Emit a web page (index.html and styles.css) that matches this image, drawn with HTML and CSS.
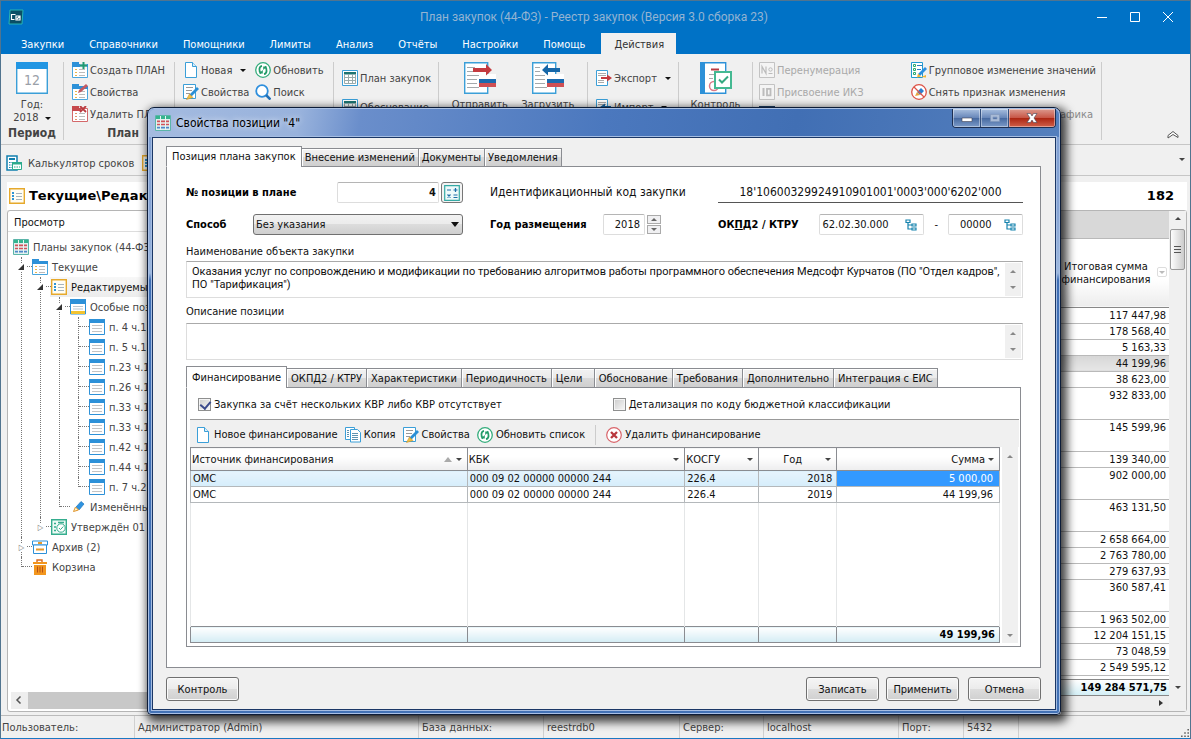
FILE: index.html
```html
<!DOCTYPE html>
<html lang="ru">
<head>
<meta charset="utf-8">
<title>План закупок (44-ФЗ) - Реестр закупок</title>
<link rel="stylesheet" href="styles.css">
</head>
<body>
<svg class="defs" aria-hidden="true">
  <symbol id="doc" viewBox="0 0 16 16"><path d="M2.5.5h7l4 4v11h-11z" fill="#fff" stroke="#3b9fd8"/><path d="M9.500 .5v4h4" fill="#d8eefb" stroke="#3b9fd8"/></symbol>
  <symbol id="edit" viewBox="0 0 16 16"><path d="M.5.5h12v14H.5z" fill="#fff" stroke="#3b9fd8"/><path d="M3 3.500h7M3 6.500h6M3 9.500h4" stroke="#999"/><path d="M6 13l1-3 7-7 2 2-7 7z" fill="#2a8fd6"/><path d="M3.500 15.500l3-5.500 3.500 3.500z" fill="#f3c244" stroke="#c8922a" stroke-width=".6"/></symbol>
  <symbol id="refresh" viewBox="0 0 16 16"><circle cx="8" cy="8" r="7.300" fill="#fff" stroke="#35ad7c" stroke-width="1.300"/><path d="M7 3.800C4 4.500 3.500 9 6 11.500M9 12.200c3-.7 3.500-5.200 1-7.700" fill="none" stroke="#239b68" stroke-width="1.800"/><path d="M4 11.500h3.800V8zM12 4.500H8.200V8z" fill="#239b68"/></symbol>
  <symbol id="search" viewBox="0 0 16 16"><circle cx="7" cy="7" r="5.800" fill="#fff" stroke="#2f8fdd" stroke-width="1.800"/><path d="M11 11l4.500 4.500" stroke="#2472b8" stroke-width="2.600"/></symbol>
  <symbol id="plan" viewBox="0 0 16 16"><path d="M.5 2.500h15v13H.5z" fill="#fff" stroke="#4aa6de"/><path d="M0 0h7v2h9v3H0z" fill="#2d91d8"/><path d="M3 7.500h2M3 10.500h2M3 13.500h2" stroke="#e8b54a"/><path d="M7 7.500h6M7 10.500h6M7 13.500h6" stroke="#bbb"/></symbol>
  <symbol id="planadd" viewBox="0 0 16 16"><use href="#plan"/><path d="M8 0h7v7H8z" fill="#f0f0f0" opacity=".6"/><path d="M11.500 0v7M8 3.500h7" stroke="#219a72" stroke-width="2"/></symbol>
  <symbol id="planedit" viewBox="0 0 16 16"><use href="#plan"/><path d="M6 9l1-3 7-6 2 2-7 6z" fill="#c45a62"/></symbol>
  <symbol id="plandel" viewBox="0 0 16 16"><path d="M.5 2.500h15v13H.5z" fill="#fff" stroke="#d4686a"/><path d="M0 0h7v2h2v3H0z" fill="#c6494d"/><path d="M3 7.500h2M3 10.500h2M3 13.500h2" stroke="#e0926a"/><path d="M7 7.500h6M7 10.500h6M7 13.500h6" stroke="#bbb"/><path d="M8 0l6 6M14 0L8 6" stroke="#b93b40" stroke-width="1.800"/></symbol>
  <symbol id="table" viewBox="0 0 16 16"><path d="M.5.5h15v15H.5z" fill="#fff" stroke="#3b9fd8"/><path d="M2 2h12v2.500H2z" fill="#1c7370"/><path d="M2.500 4v9.500h11V4M2.500 7.500h11M2.500 10.500h11M6.500 4v9M10.500 4v9" fill="none" stroke="#9aa"/></symbol>
  <symbol id="grid" viewBox="0 0 16 16"><path d="M.5.5h15v15H.5z" fill="#dff1ee" stroke="#5bb5a9"/><path d="M1 1h14v3H1z" fill="#36b48f"/><path d="M2 6.500h12M2 9.500h12" stroke="#d2525a" stroke-width="2"/><path d="M2 12.500h12" stroke="#4f88c8" stroke-width="2"/><path d="M5.500 1v14M10.500 1v14M1 8h14M1 11h14" stroke="#e9f5f3"/></symbol>
  <symbol id="list" viewBox="0 0 16 16"><path d="M.7.7h14.600v14.600H.7z" fill="#fffdf4" stroke="#e6a92c" stroke-width="1.400"/><path d="M3 4h2v2H3zM3 7h2v2H3zM3 10h2v2H3z" fill="#2d95d6"/><path d="M7 5.500h6M7 8.500h6M7 11.500h6" stroke="#a7b5bd"/></symbol>
  <symbol id="special" viewBox="0 0 16 16"><path d="M.5.5h15v14.500H.5z" fill="#fff" stroke="#2d91d8"/><path d="M0 0h16v5H0z" fill="#2d91d8"/><path d="M3 7.500h10M3 10h10" stroke="#b8c7cf"/><path d="M1 12h14v3H1z" fill="#f2c331"/></symbol>
  <symbol id="page" viewBox="0 0 16 16"><path d="M.5.500h15v15H.5z" fill="#fff" stroke="#2d91d8"/><path d="M0 0h16v4H0z" fill="#2d91d8"/><path d="M3 6.500h10M3 9.500h10M3 12.500h10" stroke="#c4c4c4"/></symbol>
  <symbol id="pen" viewBox="0 0 16 16"><path d="M6 8l5-5.500 3 2.500-5 6z" fill="#2f93e0" stroke="#1d77bd" stroke-width=".7"/><path d="M3.500 12.500l2-4.500 3 3z" fill="#fff4d0" stroke="#e0952c"/></symbol>
  <symbol id="approved" viewBox="0 0 16 16"><path d="M.7.7h14.600v14.600H.7z" fill="#eefaf6" stroke="#35ad8e" stroke-width="1.400"/><path d="M3 4.500h2M3 8h2M3 11.500h2M7 3.500h6" stroke="#35ad8e" stroke-width="1.500"/><circle cx="10" cy="9" r="4.200" fill="#fff" stroke="#35ad8e"/><path d="M8 9l1.500 1.600L12.300 7.500" fill="none" stroke="#35ad8e"/></symbol>
  <symbol id="archive" viewBox="0 0 16 16"><path d="M.5 2h15v4H.5z" fill="#fff" stroke="#2d91d8"/><path d="M1.500 6h13v8.500h-13z" fill="#fff" stroke="#2d91d8"/><path d="M6 4h4M4 10.500h8" stroke="#e79a2b" stroke-width="2"/></symbol>
  <symbol id="trash" viewBox="0 0 16 16"><path d="M5 3V1h5v2" fill="none" stroke="#d96a1f" stroke-width="1.400"/><path d="M1 3h14v2H1zM2 6h12v10H2z" fill="#f2961e"/><path d="M5.500 7.500v6M8 7.500v6M10.500 7.500v6" stroke="#b85018"/></symbol>
  <symbol id="calc" viewBox="0 0 16 16"><path d="M1 1h10v14H1z" fill="#fff" stroke="#117fae" stroke-width="1.500"/><path d="M3 3h6v2H3z" fill="#117fae"/><path d="M3 7.500h6M3 10h4M3 12.500h3" stroke="#117fae" stroke-dasharray="1.500 1"/><path d="M6.500 7.500h9v7h-9z" fill="#fff" stroke="#2cab8d"/><path d="M6 7h10v2.500H6z" fill="#2cab8d"/><path d="M8 12h6" stroke="#2cab8d" stroke-dasharray="1.500 1"/></symbol>
  <symbol id="exp" viewBox="0 0 16 16"><path d="M.5.500h11v15H.5z" fill="#fff" stroke="#3b9fd8"/><path d="M2 3.500h8M2 5.500h8M2 10.500h6M2 12.500h6" stroke="#aaa"/><path d="M5 7h6V4.500l5 3.500-5 3.500V9H5z" fill="#c43a3f"/></symbol>
  <symbol id="imp" viewBox="0 0 16 16"><path d="M.5.500h11v15H.5z" fill="#fff" stroke="#3b9fd8"/><path d="M2 3.500h8M2 5.500h8M2 10.500h6M2 12.500h6" stroke="#aaa"/><path d="M15 7H9V4.500L4 8l5 3.500V9h6z" fill="#1667a8"/></symbol>
  <symbol id="copy" viewBox="0 0 16 16"><path d="M.5.500h9v12h-9z" fill="#fff" stroke="#3b9fd8"/><path d="M5.500 2.500h7l3 3v9.500h-10z" fill="#fff" stroke="#3b9fd8"/><path d="M7 6.500h6M7 8.500h6M7 10.500h6M7 12.500h6M2 3.500h2M2 5.500h2M2 7.500h2M2 9.500h2" stroke="#5d92b0"/></symbol>
  <symbol id="delete" viewBox="0 0 16 16"><circle cx="8" cy="8" r="7.300" fill="#fff" stroke="#d9646a" stroke-width="1.200"/><path d="M5 5l6 6M11 5l-6 6" stroke="#b9383e" stroke-width="2.300"/></symbol>
  <symbol id="num" viewBox="0 0 16 16"><path d="M.5.500h15v15H.5z" fill="#f4f4f4" stroke="#c3c3c3"/><path d="M3 11.500v-7l4 7v-7M9.500 11.500h4" fill="none" stroke="#bcbcbc" stroke-width="1.200"/><circle cx="11.500" cy="7.500" r="1.700" fill="none" stroke="#bcbcbc"/></symbol>
  <symbol id="idn" viewBox="0 0 16 16"><path d="M.5.500h15v15H.5z" fill="#f4f4f4" stroke="#c3c3c3"/><path d="M4.500 4v8" stroke="#bcbcbc" stroke-width="2"/><path d="M8 4.800h3.500v6.500H8z" fill="none" stroke="#bcbcbc" stroke-width="1.800"/></symbol>
  <symbol id="group" viewBox="0 0 16 16"><path d="M.5.500h11v15H.5z" fill="#fff" stroke="#209ad0"/><path d="M2.500 2.500h2v2h-2zM2.500 6.500h2v2h-2zM2.500 10.500h2v2h-2z" fill="none" stroke="#2cab6d"/><path d="M6 3.500h5M6 7.500h4" stroke="#2a80c0"/><path d="M7 12l7-7 2 2-7 7z" fill="#2a8fe0"/><path d="M6 15.500l1-4 3 3zM10 15l5-2v2.500z" fill="#f3b530"/></symbol>
  <symbol id="unmark" viewBox="0 0 16 16"><circle cx="8" cy="8" r="7.300" fill="#fff" stroke="#dd5347" stroke-width="1.300"/><path d="M6 8l4-4 3 3-4 4z" fill="#2a7fd0"/><path d="M4 12l2-4 3 3z" fill="#e9a53f"/><path d="M3 3l10 10" stroke="#dd5347" stroke-width="1.300"/></symbol>
  <symbol id="gantt" viewBox="0 0 16 16"><path d="M0 0h16v16H0z" fill="#2b6cb8"/><path d="M0 0h16v3H0z" fill="#1d3f66"/></symbol>
  <symbol id="tree" viewBox="0 0 12 12"><path d="M1 1h4v2.500H1zM7 5h4v2H7zM7 9h4v2H7zM3 3.500V10h4M3 6h4" fill="none" stroke="#1683ae" stroke-width="1.200"/></symbol>
  <symbol id="send" viewBox="0 0 32 32"><path d="M.7.700h23v30.500H.7z" fill="#fff" stroke="#3b9fd8" stroke-width="1.400"/><path d="M3 5.500h8M3 9.500h6M3 13.500h12M3 17.500h10M3 21.500h10M3 25.500h12" stroke="#a3a8ab"/><path d="M15 12h17v5H15z" fill="#fff"/><path d="M15 17h17v4H15z" fill="#1b6bb0"/><path d="M15 21h17v4H15z" fill="#cf4f54"/><path d="M9 6h13V2l6 6-6 5.500V10H9z" fill="#c43a3f"/></symbol>
  <symbol id="load" viewBox="0 0 32 32"><path d="M.7.700h23v30.500H.7z" fill="#fff" stroke="#3b9fd8" stroke-width="1.400"/><path d="M3 5.500h5M3 9.500h5M3 13.500h10M3 17.500h10M3 21.500h10M3 25.500h12" stroke="#a3a8ab"/><path d="M15 12h17v5H15z" fill="#fff"/><path d="M15 17h17v4H15z" fill="#1b6bb0"/><path d="M15 21h17v4H15z" fill="#cf4f54"/><path d="M28 6H16V2l-6 6 6 5.500V10h12z" fill="#1667a8"/></symbol>
  <symbol id="control" viewBox="0 0 32 32"><path d="M.7.700h25v30.500H.7z" fill="#fff" stroke="#2d91d8" stroke-width="1.400"/><path d="M0 0h5v32H0z" fill="#2d91d8"/><path d="M11 7.500h8" stroke="#b93b40" stroke-width="2"/><path d="M9 12.500h6M9 16.500h4" stroke="#aaa"/><circle cx="14" cy="24" r="4.500" fill="none" stroke="#dc7b88" stroke-width="1.500"/><path d="M15 10h16v16H15z" fill="#fff" stroke="#45b992" stroke-width="2"/><path d="M19 17.500l3 3 6-6" fill="none" stroke="#35a880" stroke-width="2"/></symbol>
  <symbol id="cal" viewBox="0 0 32 32"><path d="M.7.700h30.600v30.600H.7z" fill="#fff" stroke="#3b9fd8" stroke-width="1.400"/><path d="M0 0h32v7H0z" fill="#2196e3"/></symbol>
</svg>

<div class="app">
  <header class="titlebar">
    <svg class="logo" viewBox="0 0 16 16"><path d="M2 1h13l-1 14H1z" fill="#0a4f66" stroke="#27b5b5"/><path d="M7.500 5.500h-4v5h3M8 7h4v4H8zM9 10l3-3" fill="none" stroke="#fff" stroke-width="1.200"/></svg>
    <h1>План закупок (44-ФЗ) - Реестр закупок (Версия 3.0 сборка 23)</h1>
    <div class="winbtns">
      <button aria-label="Свернуть"><svg viewBox="0 0 12 12"><path d="M1 6.500h10"/></svg></button>
      <button aria-label="Развернуть"><svg viewBox="0 0 12 12"><path d="M1.500 1.500h9v9h-9z"/></svg></button>
      <button aria-label="Закрыть"><svg viewBox="0 0 12 12"><path d="M1 1l10 10M11 1L1 11"/></svg></button>
    </div>
  </header>
  <nav class="menu">
    <button>Закупки</button><button>Справочники</button><button>Помощники</button><button>Лимиты</button><button>Анализ</button><button>Отчёты</button><button>Настройки</button><button>Помощь</button><button class="active">Действия</button>
  </nav>

  <section class="ribbon">
    <div class="group g-period">
      <button class="big"><span class="calicon"><svg class="i32"><use href="#cal"/></svg><span class="day">12</span></span><span>Год:</span><span>2018 <i class="dd"></i></span></button>
      <b>Период</b>
    </div>
    <div class="group g-plan">
      <div class="stack">
        <button><svg class="i"><use href="#planadd"/></svg>Создать ПЛАН</button>
        <button><svg class="i"><use href="#planedit"/></svg>Свойства</button>
        <button><svg class="i"><use href="#plandel"/></svg>Удалить ПЛАН</button>
      </div>
      <b>План</b>
    </div>
    <div class="group g-pos">
      <div class="cols">
        <div class="stack">
          <button><svg class="i"><use href="#doc"/></svg>Новая <i class="dd"></i></button>
          <button><svg class="i"><use href="#edit"/></svg>Свойства</button>
        </div>
        <div class="stack">
          <button><svg class="i"><use href="#refresh"/></svg>Обновить</button>
          <button><svg class="i"><use href="#search"/></svg>Поиск</button>
        </div>
      </div>
    </div>
    <div class="group g-forms">
      <div class="stack wide">
        <button><svg class="i"><use href="#table"/></svg>План закупок</button>
        <button><svg class="i"><use href="#table"/></svg>Обоснование</button>
      </div>
    </div>
    <div class="group g-eis">
      <div class="cols">
        <button class="big"><svg class="i32"><use href="#send"/></svg><span>Отправить</span></button>
        <button class="big"><svg class="i32"><use href="#load"/></svg><span>Загрузить</span></button>
      </div>
    </div>
    <div class="group g-exch">
      <div class="stack wide">
        <button><svg class="i"><use href="#exp"/></svg>Экспорт <i class="dd"></i></button>
        <button><svg class="i"><use href="#imp"/></svg>Импорт <i class="dd"></i></button>
      </div>
    </div>
    <div class="group g-check">
      <button class="big"><svg class="i32"><use href="#control"/></svg><span>Контроль</span></button>
    </div>
    <div class="group g-extra">
      <div class="cols">
        <div class="stack">
          <button disabled><svg class="i"><use href="#num"/></svg>Перенумерация</button>
          <button disabled><svg class="i"><use href="#idn"/></svg>Присвоение ИКЗ</button>
          <button disabled aria-label="График"><svg class="i"><use href="#gantt"/></svg></button>
        </div>
        <div class="stack">
          <button><svg class="i"><use href="#group"/></svg>Групповое изменение значений</button>
          <button><svg class="i"><use href="#unmark"/></svg>Снять признак изменения</button>
          <button disabled class="tail">графика</button>
        </div>
      </div>
    </div>
    <button class="collapse" aria-label="Свернуть ленту"><svg viewBox="0 0 12 10"><path d="M1 5.500l5-4 5 4v2L6 4.500 1 8z"/></svg></button>
  </section>

  <section class="quick">
    <button><svg class="i"><use href="#calc"/></svg>Калькулятор сроков</button>
    <svg class="i"><use href="#list"/></svg>
    <i class="dd end"></i>
  </section>

  <main class="work">
    <aside class="side">
      <h2><svg class="i"><use href="#list"/></svg>Текущие\Редак</h2>
      <div class="sidebox">
        <div class="view">Просмотр</div>
        <div class="tree">
          <div class="row"><svg class="i"><use href="#grid"/></svg>Планы закупок (44-ФЗ)</div>
          <ul>
            <li><div class="row"><i class="open"></i><svg class="i"><use href="#plan"/></svg>Текущие</div>
              <ul>
                <li><div class="row sel"><i class="open"></i><svg class="i"><use href="#list"/></svg>Редактируемые</div>
                  <ul>
                    <li><div class="row"><i class="open"></i><svg class="i"><use href="#special"/></svg>Особые позиции</div>
                      <ul>
                        <li><div class="row"><svg class="i"><use href="#page"/></svg>п. 4 ч.1</div></li>
                        <li><div class="row"><svg class="i"><use href="#page"/></svg>п. 5 ч.1</div></li>
                        <li><div class="row"><svg class="i"><use href="#page"/></svg>п.23 ч.1</div></li>
                        <li><div class="row"><svg class="i"><use href="#page"/></svg>п.26 ч.1</div></li>
                        <li><div class="row"><svg class="i"><use href="#page"/></svg>п.33 ч.1</div></li>
                        <li><div class="row"><svg class="i"><use href="#page"/></svg>п.33 ч.1</div></li>
                        <li><div class="row"><svg class="i"><use href="#page"/></svg>п.42 ч.1</div></li>
                        <li><div class="row"><svg class="i"><use href="#page"/></svg>п.44 ч.1</div></li>
                        <li><div class="row"><svg class="i"><use href="#page"/></svg>п. 7 ч.2</div></li>
                      </ul></li>
                    <li><div class="row"><svg class="i"><use href="#pen"/></svg>Изменённые</div></li>
                  </ul></li>
                <li><div class="row"><i class="shut"></i><svg class="i"><use href="#approved"/></svg>Утверждён 01</div></li>
              </ul></li>
            <li><div class="row"><i class="shut"></i><svg class="i"><use href="#archive"/></svg>Архив (2)</div></li>
            <li><div class="row"><svg class="i"><use href="#trash"/></svg>Корзина</div></li>
          </ul>
        </div>
        <div class="hscroll"><svg viewBox="0 0 8 8"><path d="M5.500 .5L2 4l3.500 3.500"/></svg><span></span></div>
      </div>
    </aside>

    <section class="data">
      <div class="count">182</div>
      <div class="datagrid">
        <div class="datamain">
          <table class="sums">
            <colgroup><col><col class="c-sum"></colgroup>
            <thead><tr class="band"><th colspan="2"></th></tr>
            <tr class="head"><th></th><th>Итоговая сумма финансирования<span class="filter"><i class="dd"></i></span></th></tr></thead>
            <tbody>
              <tr><td></td><td>117 447,98</td></tr>
              <tr><td></td><td>178 568,40</td></tr>
              <tr><td></td><td>5 163,33</td></tr>
              <tr class="sel"><td></td><td>44 199,96</td></tr>
              <tr><td></td><td>38 623,00</td></tr>
              <tr class="two"><td></td><td>932 833,00</td></tr>
              <tr class="two"><td></td><td>145 599,96</td></tr>
              <tr><td></td><td>139 340,00</td></tr>
              <tr class="two"><td></td><td>902 000,00</td></tr>
              <tr class="two"><td></td><td>463 131,50</td></tr>
              <tr><td></td><td>2 658 664,00</td></tr>
              <tr><td></td><td>2 763 780,00</td></tr>
              <tr><td></td><td>279 637,93</td></tr>
              <tr class="two"><td></td><td>360 587,41</td></tr>
              <tr><td></td><td>1 963 502,00</td></tr>
              <tr><td></td><td>12 204 151,15</td></tr>
              <tr><td></td><td>73 048,59</td></tr>
              <tr><td></td><td>2 549 595,12</td></tr>
            </tbody>
          </table>
          <div class="total">149 284 571,75</div>
          <div class="hbar"><i></i></div>
        </div>
        <div class="vbar"><i class="up"></i><span class="thumb"><i></i></span><i class="dd"></i></div>
      </div>
    </section>
  </main>

  <footer class="status">
    <span class="s1">Пользователь:</span><span class="s2">Администратор (Admin)</span><span class="s3">База данных:</span><span class="s4">reestrdb0</span><span class="s5">Сервер:</span><span class="s6">localhost</span><span class="s7">Порт:</span><span class="s8">5432</span><span class="s9"></span>
    <svg class="grip" viewBox="0 0 10 10"><path d="M8 0h2v2H8zM4 4h2v2H4zM8 4h2v2H8zM0 8h2v2H0zM4 8h2v2H4zM8 8h2v2H8z"/></svg>
  </footer>
</div>

<div class="dialog" role="dialog" aria-labelledby="dlg-title">
  <div class="dlgbar">
    <svg class="i"><use href="#grid"/></svg>
    <h2 id="dlg-title">Свойства позиции "4"</h2>
    <div class="aero">
      <button aria-label="Свернуть"><svg viewBox="0 0 12 12"><path d="M1 6h10v3.500H1z"/></svg></button>
      <button aria-label="Развернуть" disabled><svg viewBox="0 0 12 12"><path d="M1.500 2.500h9v7h-9zM4 5h4v2H4z" fill-rule="evenodd"/></svg></button>
      <button class="close" aria-label="Закрыть"><svg viewBox="0 0 12 12"><path d="M1 1.500h3.500L6 4l1.500-2.500H11L8 6l3 4.500H7.500L6 8l-1.500 2.500H1L4 6z"/></svg></button>
    </div>
  </div>
  <form class="client">
    <div class="tabs">
      <button type="button" class="tab on">Позиция плана закупок</button><button type="button" class="tab">Внесение изменений</button><button type="button" class="tab">Документы</button><button type="button" class="tab">Уведомления</button>
    </div>
    <div class="panel">
      <div class="fields">
        <div class="cell"><label class="lb" for="pos">№ позиции в плане</label><span class="posbox"><input id="pos" class="box strong" value="4"><button type="button" class="calcbtn" aria-label="Пронумеровать"><svg viewBox="0 0 16 16"><path d="M.7.700h14.600v14.600H.7z" fill="#eefafa" stroke="#35aaa5" stroke-width="1.200"/><path d="M3 5h4M9.500 5h4M11.500 3v4M3.500 9.500l3 3M6.500 9.500l-3 3M9.500 10h4M9.500 12.500h4" stroke="#1c6fa8" stroke-width="1.200"/></svg></button></span></div>
        <div class="cell mid">Идентификационный код закупки</div>
        <div class="cell code">18'10600329924910901001'0003'000'6202'000</div>
        <div class="cell"><label class="lb" for="way">Способ</label><span class="selbox"><select id="way"><option>Без указания</option></select><i class="dd"></i></span></div>
        <div class="cell year"><label class="lb" for="year">Год размещения</label><input id="year" class="box" value="2018"><span class="spin"><button type="button" aria-label="Больше"><i class="up"></i></button><button type="button" aria-label="Меньше"><i class="dd"></i></button></span></div>
        <div class="cell okpd"><label class="lb" for="okpd">ОК<u>П</u>Д2 / КТРУ</label><span class="box pick wide"><input id="okpd" value="62.02.30.000"><button type="button" aria-label="Выбрать ОКПД2"><svg><use href="#tree"/></svg></button></span><span>-</span><span class="box pick"><input aria-label="КТРУ" value="00000"><button type="button" aria-label="Выбрать КТРУ"><svg><use href="#tree"/></svg></button></span></div>
      </div>
      <label class="cap" for="name">Наименование объекта закупки</label>
      <div class="memo"><textarea id="name">Оказания услуг по сопровождению и модификации по требованию алгоритмов работы программного обеспечения Медсофт Курчатов (ПО "Отдел кадров", ПО "Тарификация")</textarea><span class="mscroll"><i class="up"></i><i class="dd"></i></span></div>
      <label class="cap" for="desc">Описание позиции</label>
      <div class="memo"><textarea id="desc"></textarea><span class="mscroll"><i class="up"></i><i class="dd"></i></span></div>

      <div class="tabs inner">
        <button type="button" class="tab on">Финансирование</button><button type="button" class="tab">ОКПД2 / КТРУ</button><button type="button" class="tab">Характеристики</button><button type="button" class="tab">Периодичность</button><button type="button" class="tab">Цели</button><button type="button" class="tab">Обоснование</button><button type="button" class="tab">Требования</button><button type="button" class="tab">Дополнительно</button><button type="button" class="tab">Интеграция с ЕИС</button>
      </div>
      <div class="subpanel">
        <div class="checks">
          <label><input type="checkbox" checked>Закупка за счёт нескольких КВР либо КВР отсутствует</label>
          <label><input type="checkbox">Детализация по коду бюджетной классификации</label>
        </div>
        <div class="tools">
          <button type="button"><svg class="i"><use href="#doc"/></svg>Новое финансирование</button>
          <button type="button"><svg class="i"><use href="#copy"/></svg>Копия</button>
          <button type="button"><svg class="i"><use href="#edit"/></svg>Свойства</button>
          <button type="button"><svg class="i"><use href="#refresh"/></svg>Обновить список</button>
          <span class="sep"></span>
          <button type="button"><svg class="i"><use href="#delete"/></svg>Удалить финансирование</button>
        </div>
        <div class="finbox">
          <table class="fin">
            <colgroup><col class="f1"><col class="f2"><col class="f3"><col class="f4"><col></colgroup>
            <thead><tr><th><div>Источник финансирования<span><i class="up"></i><i class="dd"></i></span></div></th><th><div>КБК<i class="dd"></i></div></th><th><div>КОСГУ<i class="dd"></i></div></th><th><div><span></span>Год<i class="dd"></i></div></th><th><div class="r">Сумма<i class="dd"></i></div></th></tr></thead>
            <tbody>
              <tr class="cur"><td>ОМС</td><td>000 09 02 00000 00000 244</td><td>226.4</td><td class="n">2018</td><td class="n pad hot">5 000,00</td></tr>
              <tr><td>ОМС</td><td>000 09 02 00000 00000 244</td><td>226.4</td><td class="n">2019</td><td class="n pad">44 199,96</td></tr>
              <tr class="fill"><td></td><td></td><td></td><td></td><td></td></tr>
            </tbody>
            <tfoot><tr><td></td><td></td><td></td><td></td><td class="n">49 199,96</td></tr></tfoot>
          </table>
          <span class="fscroll"><i class="up"></i><i class="dd"></i></span>
        </div>
      </div>
    </div>
    <div class="actions">
      <button type="button">Контроль</button><span></span><button type="button">Записать</button><button type="button">Применить</button><button type="button" class="last">Отмена</button>
    </div>
  </form>
</div>
</body>
</html>
```

FILE: styles.css
```css
* { box-sizing: border-box; }
html, body { margin: 0; height: 100%; }
body {
  font: 11px/13px "DejaVu Sans Condensed", "DejaVu Sans", sans-serif;
  color: #111;
  overflow: hidden;
}
button, input, select, textarea { font: inherit; color: inherit; margin: 0; }
button { background: none; border: 0; padding: 0; white-space: nowrap; }
h1, h2 { margin: 0; font-weight: normal; }
.defs { position: absolute; width: 0; height: 0; }
.i { width: 16px; height: 16px; flex: none; }
.i32 { width: 32px; height: 32px; }
.dd, .up { flex: none; width: 0; height: 0; border: 3px solid transparent; }
.dd { border-top-color: currentColor; border-bottom: 0; }
.up { border-bottom-color: currentColor; border-top: 0; }

/* main window */
.app { display: flex; flex-direction: column; height: 100vh; background: #f0f0f0; border: 1px solid #51748f; border-bottom-color: #1a78c2; color: #444; }
.titlebar { display: flex; align-items: center; height: 32px; padding: 0 7px; background: #0072c6; color: #94b4d2; }
.logo { width: 16px; height: 16px; }
.titlebar h1 { flex: 1; padding-left: 68px; text-align: center; font: 12px/14px Roboto, sans-serif; }
.winbtns { display: flex; gap: 21px; padding-right: 9px; }
.winbtns svg { display: block; width: 12px; height: 12px; fill: none; stroke: #fff; }
.menu { display: flex; height: 21px; padding-left: 7px; background: #0072c6; color: #fff; }
.menu button { padding: 2px 12px 0 13px; }
.menu .active { margin-left: 4px; background: #f0f0f0; color: #333; }

.ribbon { display: flex; height: 91px; padding: 8px 0 4px; border-bottom: 1px solid #c6c6c6; background: #f0f0f0; position: relative; flex: none; }
.group { display: flex; flex-direction: column; justify-content: space-between; border-right: 1px solid #ccc; flex: none; padding-left: 8px; }
.group b { text-align: center; font-size: 12px; }
.stack { display: flex; flex-direction: column; gap: 6px; }
.stack button { display: flex; align-items: center; gap: 2px; height: 16px; }
.stack.wide { gap: 13px; padding-top: 8px; }
.stack .dd { margin-left: 6px; color: #111; }
.cols { display: flex; gap: 6px; }
.big { display: flex; flex-direction: column; align-items: center; line-height: 13px; }
.big .dd { display: inline-block; vertical-align: middle; margin-left: 3px; color: #111; }
.big svg { display: block; margin-bottom: 4px; }
.calicon { position: relative; }
.day { position: absolute; left: 0; right: 0; top: 12px; font-size: 14px; color: #9aa0a8; }
.g-period { width: 63px; padding: 0; }
.g-plan { width: 111px; }
.g-pos { width: 159px; }
.g-forms { width: 105px; }
.g-eis { width: 149px; padding: 0 6px; }
.g-eis .cols { justify-content: space-around; gap: 0; }
.g-exch { width: 91px; }
.g-check { width: 74px; padding: 0; }
.g-extra { width: 349px; padding-left: 6px; padding-right: 5px; }
.g-extra .cols { justify-content: space-between; }
.ribbon button:disabled { color: #a9a9a9; }
.ribbon .stack .tail { justify-content: flex-end; color: #8a8a8a; padding-right: 3px; }
.collapse { margin: auto 11px 0 auto; }
.collapse svg { display: block; width: 12px; height: 10px; fill: #fff; stroke: #555; }

.quick { display: flex; align-items: center; gap: 8px; height: 31px; flex: none; padding: 6px 5px 0; border-bottom: 1px solid #c6c6c6; }
.quick button { display: flex; align-items: center; gap: 6px; }
.quick .end { margin: 0 0 8px auto; }

.work { flex: 1; display: flex; min-height: 0; padding: 6px 3px 3px 6px; }
.side { width: 240px; flex: none; display: flex; flex-direction: column; }
.side h2 { display: flex; align-items: center; gap: 4px; height: 28px; padding-left: 2px; background: #fff; font: bold 13px/18px "DejaVu Sans", sans-serif; color: #000; white-space: nowrap; flex: none; }
.sidebox { flex: 1; min-height: 0; display: flex; flex-direction: column; background: #fff; border: 1px solid #b5b5b5; border-radius: 3px; }
.view { height: 21px; padding: 5px 6px 3px; border-bottom: 1px solid #ddd; color: #111; flex: none; }
.tree { flex: 1; min-height: 0; padding: 5px 0 0 5px; }
.tree ul { list-style: none; margin: 0; padding: 0 0 0 8px; }
.tree ul ul { padding-left: 19px; }
.tree li { position: relative; }
.tree li::before { content: ""; position: absolute; left: 0; top: 0; bottom: 0; border-left: 1px dotted #777; }
.tree li:last-child::before { bottom: auto; height: 10px; }
.row { position: relative; display: flex; align-items: center; gap: 4px; height: 20px; white-space: nowrap; }
.tree li > .row { padding-left: 11px; }
.tree li > .row::before { content: ""; position: absolute; left: 1px; top: 9px; width: 10px; border-top: 1px dotted #777; }
.tree li > .row.sel { background: linear-gradient(#f7f7f7, #ececec) no-repeat 10px 0; color: #111; }
.open, .shut { position: absolute; left: -4px; top: 6px; width: 9px; height: 8px; background: #fff; }
.open::before { content: ""; position: absolute; left: 1px; top: 1px; border: solid transparent; border-width: 0 0 6px 6px; border-bottom-color: #333; }
.shut { display: flex; align-items: center; justify-content: center; }
.shut::before { content: "▷"; font-size: 8px; font-style: normal; color: #777; }
.hscroll { display: flex; height: 17px; margin: 0 0 2px 3px; background: #eee; flex: none; }
.hscroll svg { width: 8px; height: 8px; margin: 4px 5px 4px 4px; fill: none; stroke: #555; stroke-width: 1.5; }
.hscroll span { flex: 1; background: #c8c8c8; }

.data { flex: 1; min-width: 0; display: flex; flex-direction: column; }
.count { height: 28px; flex: none; background: #fff; text-align: right; padding: 6px 13px; font: bold 13px/16px "DejaVu Sans", sans-serif; color: #000; }
.datagrid { flex: 1; min-height: 0; display: flex; border: 1px solid #b5b5b5; border-radius: 3px; background: #fff; color: #111; }
.datamain { flex: 1; min-width: 0; display: flex; flex-direction: column; }
.sums { width: 100%; border-collapse: collapse; table-layout: fixed; }
.c-sum { width: 130px; }
.sums th, .sums td { font-weight: normal; padding: 0; border-bottom: 1px solid #b9b9b9; }
.band th { height: 27px; background: #d8d8d8; }
.head th { position: relative; height: 69px; background: linear-gradient(#fff 60%, #ececec); border-color: #888; }
.head th:last-child { padding: 0 13px 0 17px; }
.filter { position: absolute; right: 2px; top: 28px; width: 10px; height: 10px; border: 1px solid #ddd; border-radius: 2px; padding: 3px 1px; color: #bbb; }
.filter .dd { display: block; }
.sums tbody td { height: 16px; line-height: 15px; text-align: right; padding-right: 3px; vertical-align: top; }
.sums .two td { height: 32px; }
.sums .sel td { background: linear-gradient(#d6d6d6, #e6e6e6); }
.total { margin-top: 3px; height: 17px; line-height: 15px; border: 1px solid #888; border-width: 1px 0; background: linear-gradient(#fff, #d3eff6); text-align: right; font-weight: bold; color: #000; padding-right: 2px; }
.hbar { flex: 1; background: #eee; display: flex; justify-content: flex-end; align-items: center; padding-right: 6px; }
.hbar i { border: solid transparent; border-width: 3px 0 3px 4px; border-left-color: #333; }
.vbar { width: 17px; background: #f0f0f0; display: flex; flex-direction: column; align-items: center; padding: 6px 0 22px; color: #444; }
.vbar .thumb { width: 15px; height: 41px; margin-top: 9px; margin-bottom: auto; border: 1px solid #999; border-radius: 2px; background: linear-gradient(90deg, #fdfdfd, #ccc); display: flex; align-items: center; justify-content: center; }
.thumb i { width: 7px; height: 7px; background: repeating-linear-gradient(#555 0 1px, transparent 1px 3px); }

.status { display: flex; height: 23px; flex: none; border-top: 1px solid #bbb; background: #f0f0f0; }
.status span { border-right: 1px solid #d0d0d0; padding: 5px 3px; flex: none; white-space: nowrap; }
.status .s1 { width: 134px; padding-left: 1px; }
.status .s2 { width: 284px; }
.status .s3 { width: 125px; }
.status .s4 { width: 136px; }
.status .s5 { width: 84px; }
.status .s6 { width: 135px; }
.status .s7 { width: 65px; }
.status .s8 { width: 55px; }
.status .s9 { flex: 1; border: 0; }
.grip { width: 8px; height: 8px; margin: auto 1px 1px 0; fill: #666; }

/* dialog window */
.dialog {
  position: absolute; left: 147px; right: 130px; top: 107px; bottom: 24px;
  display: flex; flex-direction: column; padding: 0 4px 4px;
  border: 1px solid #0c1c38; border-radius: 7px 7px 4px 4px;
  background: linear-gradient(#7f9fd2 0, #86a4d4 100px, #9db8de 165px, #3f6fb5 172px, #4372b5 100%);
  box-shadow: inset 0 0 0 1px #a9c0e4, 3px 4px 10px 3px rgba(0, 0, 0, .75);
}
.dlgbar { display: flex; align-items: center; height: 28px; flex: none; margin: 1px -3px 0; padding-left: 6px; border-radius: 6px 6px 0 0; gap: 5px; background: linear-gradient(100deg, #a4bbe0 0, #98b2dc 150px, #6a8ecb 210px, #4b78be 450px, #416fb4 640px, #547fbd 100%); }
.dlgbar h2 { flex: 1; font-size: 12px; line-height: 14px; color: #000; text-shadow: 0 0 6px #fff; }
.aero { display: flex; align-self: flex-start; height: 19px; margin-right: 3px; border: 1px solid #1d2f52; border-top: 0; border-radius: 0 0 4px 4px; overflow: hidden; }
.aero button { display: flex; align-items: center; justify-content: center; width: 28px; border-right: 1px solid #33507f; background: linear-gradient(#a9bfdf, #6585b8 50%, #45689f 50%, #7c9bc9); box-shadow: inset 0 0 0 1px rgba(255, 255, 255, .4); }
.aero svg { width: 12px; height: 12px; fill: #fff; stroke: #445; stroke-width: .6; }
.aero button:disabled svg { fill: #a9bbd6; stroke: #8096b8; }
.aero .close { width: 46px; border: 0; background: linear-gradient(#dc9a8e, #c75444 50%, #ab2410 50%, #d0604a); }
.client { flex: 1; min-height: 0; margin: 0; display: flex; flex-direction: column; padding: 8px 14px 8px 13px; background: #f0f0f0; border: 1px solid #1b3766; box-shadow: 0 0 0 1px #a5bde2; }

.tabs { display: flex; align-items: flex-end; height: 21px; margin-bottom: -1px; flex: none; position: relative; }
.tab { height: 19px; padding: 0 3px; border: 1px solid #8a8c91; margin-left: -1px; background: linear-gradient(#f2f2f2, #eaeaea 50%, #d9d9d9 50%, #cfcfcf); box-shadow: inset 1px 1px 0 #fff; }
.tab.on { height: 21px; margin-left: 0; padding: 0 5px; background: #fff; border-bottom-color: #fff; box-shadow: none; }
.panel { flex: 1; min-height: 0; display: flex; flex-direction: column; padding: 15px 17px 20px 19px; background: #fff; border: 1px solid #8a8c91; }
.fields { display: grid; grid-template-columns: 304fr 228fr 305fr; row-gap: 11px; flex: none; }
.cell { display: flex; align-items: center; height: 21px; }
.lb { font-weight: bold; color: #000; }
.mid { font-size: 12px; }
.code { justify-content: center; font-size: 12px; border-bottom: 1px solid #555; height: 21px; }
.box { height: 21px; border: 1px solid #ddd; border-top-color: #b5b5b5; border-radius: 2px; background: #fff; padding: 0 5px; }
.cell > .lb { flex: 1; }
.posbox { display: flex; gap: 2px; margin-right: 27px; }
.posbox .box { width: 102px; text-align: right; padding-right: 2px; }
.strong { font-weight: bold; }
.calcbtn { width: 22px; height: 21px; border: 1px solid #777; border-radius: 3px; display: grid; place-items: center; background: #f3f3f3; }
.calcbtn svg { width: 16px; height: 16px; }
.selbox { position: relative; width: 210px; margin-right: 27px; }
.selbox select { appearance: none; display: block; width: 100%; height: 21px; padding: 0 2px; border: 1px solid #707070; border-radius: 3px; background: linear-gradient(#f2f2f2, #ebebeb 50%, #dcdcdc 50%, #cfcfcf); }
.selbox .dd { position: absolute; right: 4px; top: 8px; border-width: 5px 4px 0; color: #111; }
.year { padding-right: 57px; }
.year .box { width: 42px; text-align: right; padding-right: 4px; }
.spin { display: flex; flex-direction: column; gap: 1px; margin-left: 2px; }
.spin button { display: grid; place-items: center; width: 14px; height: 9px; border: 1px solid #aaa; color: #666; background: #f0f0f2; }
.okpd > span { margin-left: 10px; }
.okpd > .pick { display: flex; align-items: center; width: 75px; padding: 0 6px 0 3px; }
.okpd > .pick.wide { width: 105px; margin-left: 0; padding-left: 1px; }
.pick input { flex: 1; min-width: 0; width: 0; padding: 0 0 0 8px; border: 0; background: none; outline: none; }
.pick.wide input { padding: 0 0 0 1px; }
.pick svg { display: block; width: 12px; height: 12px; }
.cap { padding: 10px 0 3px; line-height: 13px; flex: none; }
.memo { display: flex; height: 37px; flex: none; border: 1px solid #ddd; border-top-color: #aaa; padding: 1px; }
.memo + .cap { padding: 7px 0 5px; }
.memo textarea { flex: 1; min-width: 0; border: 0; padding: 2px 0 2px 4px; font: 11px/13px Roboto, sans-serif; resize: none; outline: none; overflow: hidden; background: none; }
.mscroll { display: flex; flex-direction: column; justify-content: space-between; align-items: center; width: 16px; padding: 7px 0; background: #f0f0f0; color: #888; }
.inner { margin-top: 6px; height: 22px; }
.inner .tab { height: 20px; padding: 0 4px; min-width: 44px; text-align: left; }
.inner .tab.on { height: 22px; padding: 0 5px; }
.subpanel { flex: 1; min-height: 0; display: flex; flex-direction: column; margin-right: 2px; border: 1px solid #8a8c91; padding: 0 1px 3px 3px; }
.checks { display: flex; height: 31px; align-items: center; padding: 2px 8px 0; flex: none; }
.checks label { display: flex; align-items: center; gap: 3px; flex: none; white-space: nowrap; }
.checks label:first-child { width: 51%; }
.checks input { appearance: none; width: 13px; height: 13px; margin: 0; border: 1px solid #8e8f8f; background: linear-gradient(135deg, #ccc, #f8f8f8); box-shadow: inset 0 0 0 1px #f4f4f4; position: relative; }
.checks input:checked::after { content: ""; position: absolute; left: 3px; top: 0; width: 5px; height: 8px; border: solid #3b4a8c; border-width: 0 2px 2px 0; transform: rotate(40deg); }
.tools { display: flex; align-items: center; gap: 7px; height: 28px; padding: 2px 5px 0; border-top: 1px solid #999; background: #f0f0f0; flex: none; }
.tools button { display: flex; align-items: center; gap: 3px; }
.sep { width: 1px; height: 20px; margin: 0 3px; background: #ccc; }
.finbox { flex: 1; min-height: 0; display: flex; padding-right: 1px; }
.fin { flex: 1; height: 100%; border-collapse: collapse; table-layout: fixed; border: 1px solid #8a8c91; }
.f1 { width: 34.2%; } .f2 { width: 26.9%; } .f3 { width: 9.1%; } .f4 { width: 9.7%; }
.fin th, .fin td { padding: 0 2px; font-weight: normal; text-align: left; border: 1px solid #b4b8bb; }
.fin th { height: 23px; padding: 0 3px 0 1px; border-color: #8a8c91; background: linear-gradient(#fff 40%, #ededee); }
.fin th div { display: flex; align-items: center; justify-content: space-between; color: #111; }
.fin th .dd { margin-right: 2px; color: #444; }
.fin th span { display: flex; gap: 4px; align-items: center; }
.fin th .up { border-width: 0 4px 5px; color: #aaa; }
.fin th .r { justify-content: flex-end; gap: 3px; }
.fin tbody tr { height: 16px; }
.fin tbody td { line-height: 14px; }
.fin .n { text-align: right; padding-right: 4px; }
.fin .pad { padding-right: 6px; }
.cur td { background: linear-gradient(#e6f4fd, #d6edfb); }
.fin .cur .hot { background: #3399ff; color: #fff; }
.fin .fill { height: auto; }
.fin .fill td { border-bottom: 0; border-color: #e4e6e7; }
.fin tfoot td { height: 16px; border-color: #8a8c91; background: linear-gradient(#fff, #d3ecf4); font-weight: bold; color: #000; line-height: 14px; }
.fscroll { width: 16px; margin-left: 2px; display: flex; flex-direction: column; align-items: center; justify-content: space-between; padding: 8px 0 6px; background: #f0f0f0; color: #888; }
.actions { display: flex; padding-top: 9px; flex: none; gap: 7px; }
.actions span { flex: 1; }
.actions button { width: 73px; height: 24px; border: 1px solid #707070; border-radius: 3px; background: linear-gradient(#f5f5f5, #ebebeb 50%, #dddddd 50%, #d0d0d0); box-shadow: inset 0 0 0 1px #fafafa; }
.actions .last { margin-left: 2px; }
```
